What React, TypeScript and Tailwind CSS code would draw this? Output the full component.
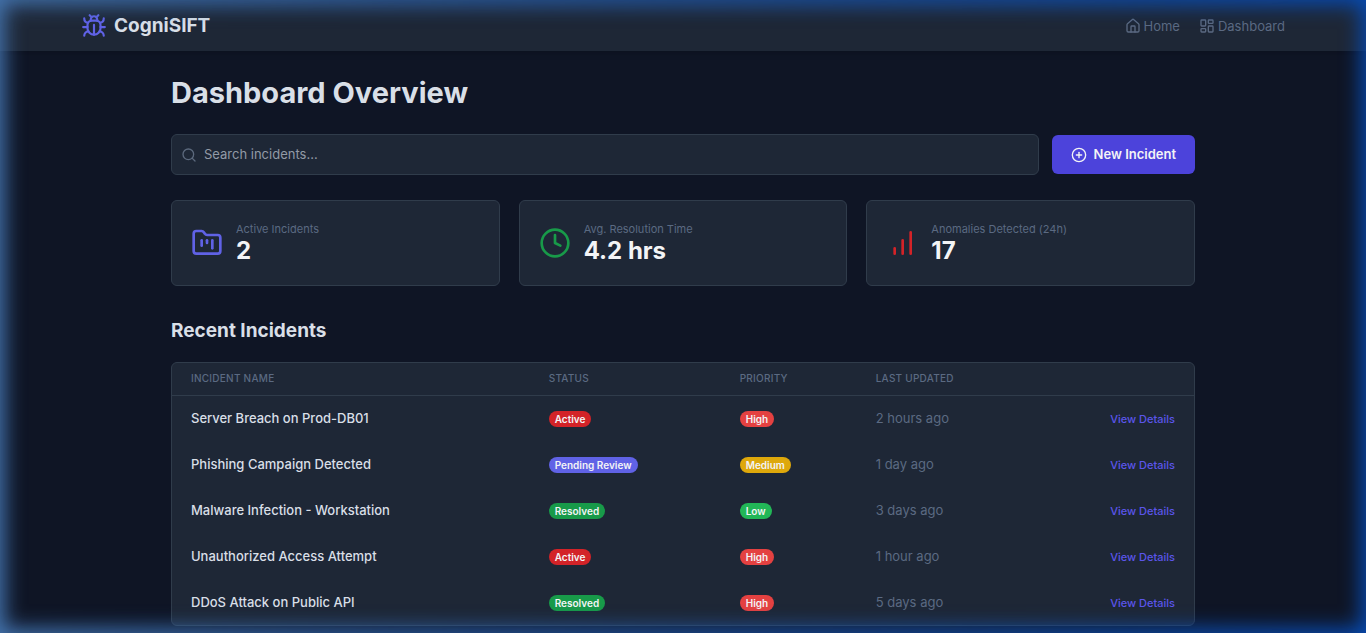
import {
  Bug,
  CirclePlus,
  Clock,
  FolderKanban,
  House,
  LayoutDashboard,
  Search,
} from "lucide-react";

type Incident = {
  name: string;
  status: "Active" | "Pending Review" | "Resolved";
  priority: "High" | "Medium" | "Low";
  updated: string;
};

const incidents: Incident[] = [
  { name: "Server Breach on Prod-DB01", status: "Active", priority: "High", updated: "2 hours ago" },
  { name: "Phishing Campaign Detected", status: "Pending Review", priority: "Medium", updated: "1 day ago" },
  { name: "Malware Infection - Workstation", status: "Resolved", priority: "Low", updated: "3 days ago" },
  { name: "Unauthorized Access Attempt", status: "Active", priority: "High", updated: "1 hour ago" },
  { name: "DDoS Attack on Public API", status: "Resolved", priority: "High", updated: "5 days ago" },
];

const badgeColors = {
  Active: "bg-[#d32328]",
  "Pending Review": "bg-[#6062e6]",
  Resolved: "bg-[#189a49]",
  High: "bg-[#e44141]",
  Medium: "bg-[#dea80b]",
  Low: "bg-[#22b757]",
};

// Tighter bar spacing than lucide's current bar chart.
function BarsIcon({ size, className }: { size: number; className?: string }) {
  return (
    <svg
      width={size}
      height={size}
      viewBox="0 0 24 24"
      fill="none"
      stroke="currentColor"
      strokeWidth="2"
      strokeLinecap="round"
      className={className}
      aria-hidden
    >
      <path d="M6.5 20v-4M12.5 20V10M18.5 20V4" />
    </svg>
  );
}

const stats = [
  { label: "Active Incidents", value: "2", icon: FolderKanban, color: "text-[#6062e6]" },
  { label: "Avg. Resolution Time", value: "4.2 hrs", icon: Clock, color: "text-[#189a49]" },
  { label: "Anomalies Detected (24h)", value: "17", icon: BarsIcon, color: "text-[#d32328]" },
];

function Badge({ label }: { label: keyof typeof badgeColors }) {
  return (
    <span
      className={`inline-block rounded-full px-[6px] text-[10px] leading-4 font-semibold text-gray-100 ${badgeColors[label]}`}
    >
      {label}
    </span>
  );
}

function Header() {
  return (
    <header className="bg-[#1e2736] shadow-md">
      <div className="mx-auto flex h-[51px] max-w-[1228px] items-center justify-between px-3">
        <a href="#" className="flex items-center gap-[7px] text-[19px] leading-7 font-bold">
          <Bug size={26} className="text-[#6062e6]" />
          CogniSIFT
        </a>
        <nav className="flex gap-[19px] text-[13px] leading-5 text-[#5b6a82]">
          <a href="#" className="flex items-center gap-[3px]">
            <House size={16} />
            Home
          </a>
          <a href="#" className="flex items-center gap-[3px]">
            <LayoutDashboard size={16} />
            Dashboard
          </a>
        </nav>
      </div>
    </header>
  );
}

// Blue light around the window edge: paler on the left, deeper on the right.
function EdgeGlow() {
  return (
    <div aria-hidden className="pointer-events-none fixed inset-0">
      <div className="absolute inset-0 mask-r-from-0% mask-r-to-100% shadow-[inset_0_0_20px_5px_#4474ae]" />
      <div className="absolute inset-0 mask-l-from-0% mask-l-to-100% shadow-[inset_0_0_20px_5px_#084bb2]" />
    </div>
  );
}

export default function App() {
  return (
    <div className="h-screen overflow-hidden bg-[#0f1525] font-['Inter',sans-serif] text-[#d9dfe7]">
      <Header />

      <main className="mx-auto max-w-[1024px] pt-[22px]">
        <h1 className="text-[29px] leading-10 font-bold">Dashboard Overview</h1>

        <div className="mt-[21px] flex items-center gap-[13px]">
          <div className="relative flex-1">
            <Search size={16} className="absolute top-[13px] left-[10px] text-[#5c697d]" />
            <input
              type="text"
              aria-label="Search incidents"
              placeholder="Search incidents..."
              className="block h-[41px] w-full rounded-md border border-[#303c4b] bg-[#1e2736] pr-3 pb-[2px] pl-8 text-[13px] placeholder:text-[#929aa6]"
            />
          </div>
          <button
            type="button"
            className="flex h-[39px] items-center gap-[7px] rounded-md bg-[#4c43db] px-[19px] text-[13px] font-semibold text-gray-100"
          >
            <CirclePlus size={16} />
            New Incident
          </button>
        </div>

        <div className="mt-[25px] grid grid-cols-3 gap-[19px]">
          {stats.map(({ label, value, icon: Icon, color }) => (
            <div
              key={label}
              className="flex h-[86px] items-center gap-[13px] rounded-md border border-[#303c4b] bg-[#1e2736] px-[19px]"
            >
              <Icon size={32} className={color} />
              <div>
                <p className="text-[11px] leading-4 text-[#5b6a82]">{label}</p>
                <p className="text-[24px] leading-7 font-bold text-gray-100">{value}</p>
              </div>
            </div>
          ))}
        </div>

        <h2 className="mt-8 text-[19px] leading-[26px] font-bold">Recent Incidents</h2>

        <div className="mt-[18px] overflow-hidden rounded-md border border-[#303c4b] bg-[#1e2736]">
          <table className="w-full table-fixed text-left">
            <colgroup>
              <col className="w-[35%]" />
              <col className="w-[191px]" />
              <col className="w-[136px]" />
              <col className="w-[18%]" />
              <col />
            </colgroup>
            <thead>
              <tr className="h-8 border-b border-[#303c4b] text-[10px] tracking-wide text-[#5b6a82] uppercase">
                <th className="px-[19px] font-medium">Incident Name</th>
                <th className="px-[19px] font-medium">Status</th>
                <th className="px-[19px] font-medium">Priority</th>
                <th className="px-[19px] font-medium">Last Updated</th>
                <th className="px-[19px]" aria-label="Actions" />
              </tr>
            </thead>
            <tbody>
              {incidents.map((incident) => (
                <tr key={incident.name} className="h-[46px] text-[13px] leading-5">
                  <td className="px-[19px] font-medium">{incident.name}</td>
                  <td className="px-[19px]">
                    <Badge label={incident.status} />
                  </td>
                  <td className="px-[19px]">
                    <Badge label={incident.priority} />
                  </td>
                  <td className="px-[19px] text-[#5b6a82]">{incident.updated}</td>
                  <td className="px-[19px] text-right">
                    <a href="#" className="text-[11px] font-medium text-[#5b55ea]">
                      View Details
                    </a>
                  </td>
                </tr>
              ))}
            </tbody>
          </table>
        </div>
      </main>

      <EdgeGlow />
    </div>
  );
}
